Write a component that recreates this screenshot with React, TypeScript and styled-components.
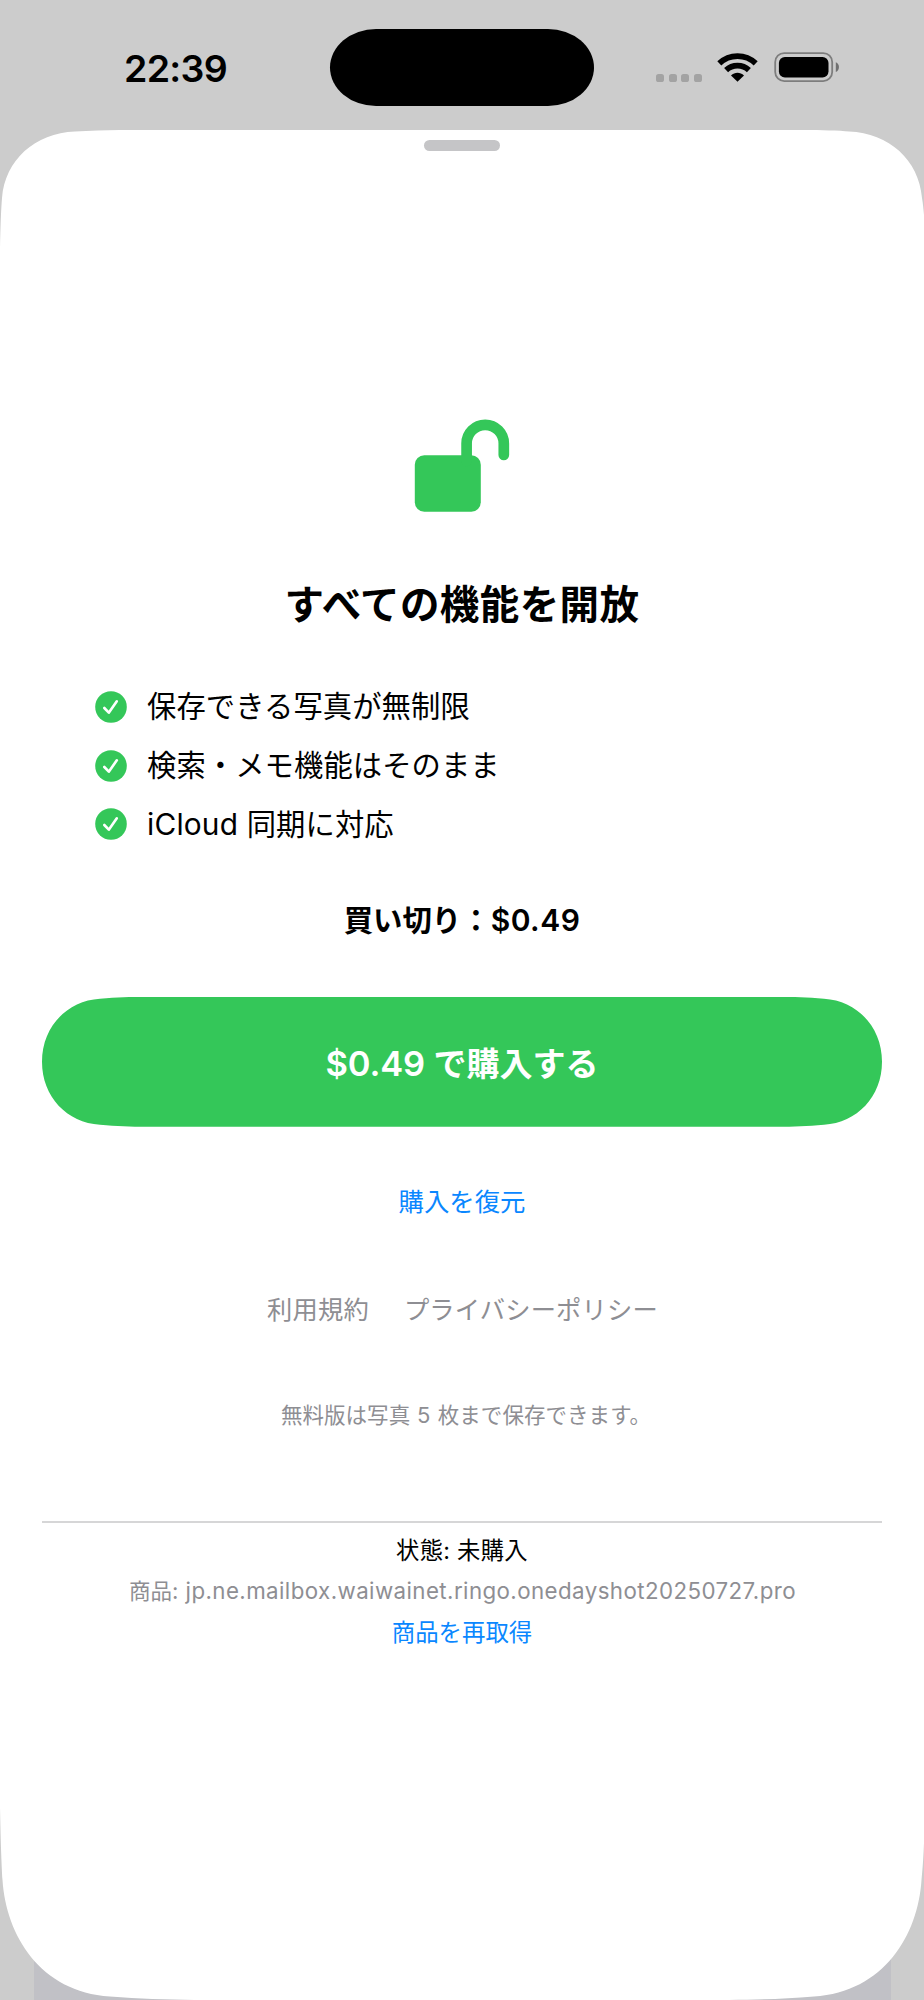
import React from "react";
import styled, { createGlobalStyle } from "styled-components";

const GREEN = "#34c759";
const BLUE = "#0a87ff";
const GRAY = "#8e8e93";

const GlobalStyle = createGlobalStyle`
  html, body { margin: 0; padding: 0; background: #ccc; }
  *, *::before, *::after { box-sizing: border-box; }
  body { font-family: Inter, "Noto Sans CJK JP", sans-serif; color: #000; }
  button { font: inherit; border: 0; padding: 0; background: none; cursor: pointer; }
  a { text-decoration: none; }
`;

const Screen = styled.div`
  width: 924px;
  height: 2000px;
  overflow: hidden;
  display: flex;
  flex-direction: column;
  background: linear-gradient(90deg, #ccc 34px, #c1c1c6 34px, #c1c1c6 891px, #ccc 891px) 0 1900px no-repeat, #ccc;
`;

const StatusBar = styled.header`
  height: 130px;
  flex: none;
  display: grid;
  grid-template-columns: 330px 264px 330px;
  align-items: start;
`;

const Clock = styled.time`
  padding: 46px 0 0 124px;
  font-size: 37.5px;
  line-height: 46px;
  font-weight: 600;
  letter-spacing: -0.7px;
  white-space: nowrap;
`;

const Island = styled.div`
  height: 77px;
  margin-top: 29px;
  border-radius: 46px / 38.5px;
  background: #000;
`;

const Indicators = styled.div`
  display: flex;
  align-items: flex-start;
  padding: 52px 0 0 62px;
`;

const SignalDots = styled.div`
  display: flex;
  gap: 4.7px;
  padding-top: 22px;
  margin-right: 15.3px;
`;

const Dot = styled.i`
  width: 8px;
  height: 8px;
  border-radius: 2.6px;
  background: #a3a3a3;
`;

const BatteryIcon = styled.svg`
  width: 66px;
  height: 30px;
  margin-left: 15.6px;
`;

const Sheet = styled.main`
  height: 1870px;
  flex: none;
  display: flex;
  flex-direction: column;
  align-items: center;
  padding: 10px 42px 0;
  background: #fff;
  clip-path: path("M0 118 C0.5 95 1 80 2 68 C5 30 35 3 75 1.5 C90 .5 105 0 120 0 H804 C820 0 840 .5 849 1.5 C889 3 919 30 922 68 C923 74 923.5 79 924 85 V1713 C923.5 1725 923 1735 921.5 1750 C918 1805 884 1862 814 1866.5 C785 1869 760 1869.5 729 1870 H195 C165 1869.5 140 1869 110 1866.5 C40 1862 6 1805 2.5 1750 C1.5 1735 .5 1705 0 1677 Z");
`;

const Grabber = styled.div`
  width: 76px;
  height: 11px;
  border-radius: 5.5px;
  background: #c5c5c7;
`;

const LockIcon = styled.svg`
  display: block;
  width: 96px;
  height: 94px;
  margin-top: 268px;
`;

const Title = styled.h1`
  margin: 63px 0 0;
  font-size: 39.5px;
  line-height: 58px;
  font-weight: 600;
  letter-spacing: 0.4px;
  white-space: nowrap;
`;

const Features = styled.ul`
  align-self: stretch;
  list-style: none;
  margin: 44px 0 0;
  padding: 0 0 0 53px;
`;

const Feature = styled.li`
  display: flex;
  align-items: center;
  gap: 20px;
  height: 58.6px;
  font-size: 29.3px;
  line-height: 44px;
  letter-spacing: 0.1px;
  white-space: nowrap;
  svg { display: block; width: 32px; height: 32px; }
`;

const Price = styled.p`
  margin: 44px 0 0;
  font-size: 29.4px;
  line-height: 44px;
  font-weight: 600;
  white-space: nowrap;
`;

const BuyButton = styled.button`
  && {
    width: 840px;
    height: 130px;
    margin-top: 54px;
    background: ${GREEN};
    color: #fff;
    font-size: 33px;
    font-weight: 600;
    white-space: nowrap;
    clip-path: path("M0 65 C0 30 25 4 58 2 C75 .6 88 0 105 0 H735 C752 0 765 .6 782 2 C815 4 840 30 840 65 C840 100 815 126 782 128 C765 129.4 752 130 735 130 H105 C88 130 75 129.4 58 128 C25 126 0 100 0 65 Z");
  }
`;

const TextButton = styled.button<{ $size: number; $top: number }>`
  && {
    margin-top: ${(p) => p.$top}px;
    font-size: ${(p) => p.$size}px;
    line-height: 38px;
    color: ${BLUE};
    white-space: nowrap;
  }
`;

const Links = styled.nav`
  display: flex;
  gap: 35px;
  margin-top: 70px;
  padding-left: 1px;
  font-size: 25.3px;
  line-height: 38px;
  letter-spacing: 0.15px;
  a { color: ${GRAY}; white-space: nowrap; }
`;

const Note = styled.p<{ $size: number; $top: number; $color?: string; $indent?: number; $track?: number }>`
  margin: ${(p) => p.$top}px 0 0;
  padding-left: ${(p) => p.$indent ?? 0}px;
  font-size: ${(p) => p.$size}px;
  line-height: 34px;
  letter-spacing: ${(p) => p.$track ?? 0}px;
  color: ${(p) => p.$color ?? GRAY};
  white-space: nowrap;
`;

const Divider = styled.hr`
  align-self: stretch;
  width: 100%;
  height: 2px;
  flex: none;
  margin: 89px 0 0;
  border: 0;
  background: #d6d6d7;
`;

const Latin = styled.span<{ $track: number; $size?: number }>`
  letter-spacing: ${(p) => p.$track}px;
  font-size: ${(p) => (p.$size ? `${p.$size}px` : "inherit")};
`;

const Wifi = () => (
  <svg width="41" height="30" viewBox="0 0 41 30" fill="none">
    <path d="M2.3 11.3 C12.5 1.6 28.5 1.6 38.7 11.3" stroke="#000" strokeWidth="5.8" />
    <path d="M9.1 18.2 C15.5 12.2 25.5 12.2 31.9 18.2" stroke="#000" strokeWidth="5.8" />
    <path d="M14 23.4 C17.8 19.7 23.2 19.7 27 23.4 L20.5 29.7 Z" fill="#000" />
  </svg>
);

const Battery = () => (
  <BatteryIcon viewBox="0 0 66 30">
    <rect x="1.2" y="1.1" width="57" height="28" rx="9" fill="none" stroke="#7d7d7d" strokeWidth="1.8" />
    <rect x="4.9" y="5" width="49.6" height="20.4" rx="6" fill="#000" />
    <path d="M61.8 10.3 C66 11.7 66 18.5 61.8 20 Z" fill="#707070" />
  </BatteryIcon>
);

const Check = () => (
  <svg viewBox="0 0 32 32">
    <circle cx="16" cy="16" r="15.8" fill={GREEN} />
    <path d="M9.3 17 L13.8 21.7 L21.8 10.3" fill="none" stroke="#fff" strokeWidth="2.6" strokeLinecap="round" strokeLinejoin="round" />
  </svg>
);

export default function App() {
  return (
    <>
      <GlobalStyle />
      <Screen>
        <StatusBar>
          <Clock>22:39</Clock>
          <Island />
          <Indicators>
            <SignalDots><Dot /><Dot /><Dot /><Dot /></SignalDots>
            <Wifi />
            <Battery />
          </Indicators>
        </StatusBar>
        <Sheet>
          <Grabber />
          <LockIcon viewBox="0 0 96 94">
            <rect x="0.8" y="36.2" width="66" height="56.5" rx="9.5" fill={GREEN} />
            <path d="M52.6 42 V24.4 A18.6 18.6 0 0 1 89.8 24.4 V36" fill="none" stroke={GREEN} strokeWidth="10.7" strokeLinecap="round" />
          </LockIcon>
          <Title>すべての機能を開放</Title>
          <Features>
            <Feature><Check />保存できる写真が無制限</Feature>
            <Feature><Check />検索・メモ機能はそのまま</Feature>
            <Feature><Check /><span><Latin $track={0.2} $size={29.8}>iCloud </Latin>同期に対応</span></Feature>
          </Features>
          <Price>買い切り：<Latin $track={0.5} $size={30}>$0.49</Latin></Price>
          <BuyButton><Latin $track={-0.2} $size={34.5}>$0.49 </Latin>で購入する</BuyButton>
          <TextButton $size={25.4} $top={56}>購入を復元</TextButton>
          <Links>
            <a href="#terms">利用規約</a>
            <a href="#privacy">プライバシーポリシー</a>
          </Links>
          <Note $size={21.5} $top={69.5} $indent={8} $track={0.05}>無料版は写真<Latin $track={0.6} $size={22}> 5 </Latin>枚まで保存できます。</Note>
          <Divider />
          <Note $size={23.3} $top={11} $color="#000" $track={0.3}>状態: 未購入</Note>
          <Note $size={21.5} $top={6} $indent={1}>商品<Latin $track={0.42} $size={22.3}>: jp.ne.mailbox.waiwainet.ringo.onedayshot20250727.pro</Latin></Note>
          <TextButton $size={23.4} $top={6}>商品を再取得</TextButton>
        </Sheet>
      </Screen>
    </>
  );
}
